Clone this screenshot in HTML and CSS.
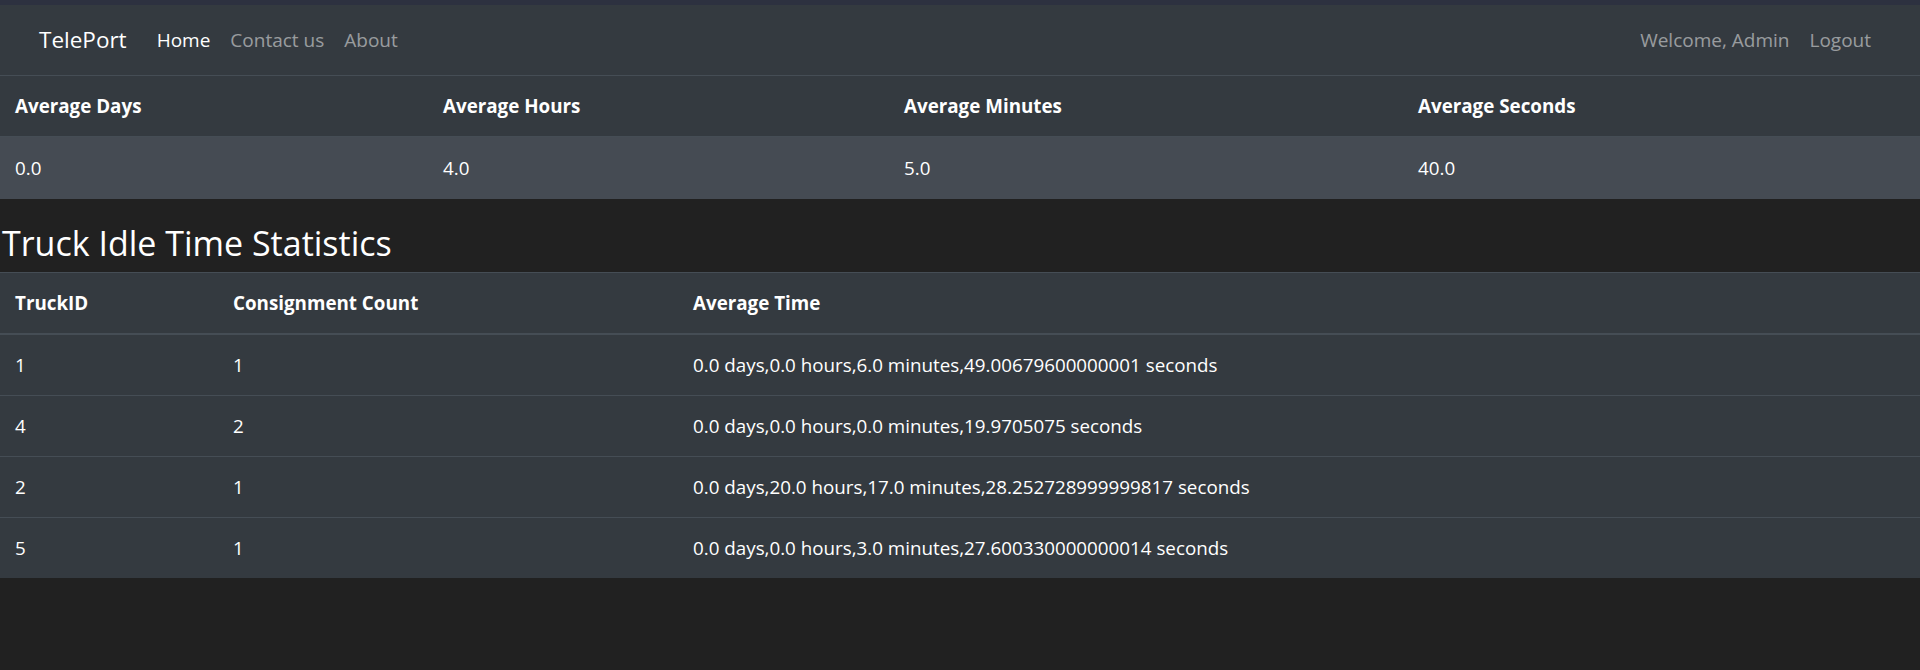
FILE: index.html
```html
<!DOCTYPE html>
<html lang="en">
<head>
<meta charset="utf-8">
<title>TelePort</title>
<link rel="stylesheet" href="styles.css">
</head>
<body>
<div class="topstrip"></div>
<nav class="navbar">
  <div class="nav-inner">
    <a class="brand" href="#">TelePort</a>
    <ul class="nav-links">
      <li><a class="nav-link active" href="#">Home</a></li>
      <li><a class="nav-link" href="#">Contact us</a></li>
      <li><a class="nav-link" href="#">About</a></li>
    </ul>
    <ul class="nav-links nav-right">
      <li><span class="nav-link">Welcome, Admin</span></li>
      <li><a class="nav-link" href="#">Logout</a></li>
    </ul>
  </div>
</nav>
<table class="table summary">
  <thead>
    <tr><th class="c1">Average Days</th><th class="c2">Average Hours</th><th class="c3">Average Minutes</th><th>Average Seconds</th></tr>
  </thead>
  <tbody>
    <tr class="hl"><td>0.0</td><td>4.0</td><td>5.0</td><td>40.0</td></tr>
  </tbody>
</table>
<h2 class="title">Truck Idle Time Statistics</h2>
<table class="table stats">
  <thead>
    <tr><th class="s1">TruckID</th><th class="s2">Consignment Count</th><th>Average Time</th></tr>
  </thead>
  <tbody>
    <tr><td>1</td><td>1</td><td>0.0 days,0.0 hours,6.0 minutes,49.00679600000001 seconds</td></tr>
    <tr><td>4</td><td>2</td><td>0.0 days,0.0 hours,0.0 minutes,19.9705075 seconds</td></tr>
    <tr><td>2</td><td>1</td><td>0.0 days,20.0 hours,17.0 minutes,28.252728999999817 seconds</td></tr>
    <tr><td>5</td><td>1</td><td>0.0 days,0.0 hours,3.0 minutes,27.600330000000014 seconds</td></tr>
  </tbody>
</table>
</body>
</html>
```
FILE: styles.css
```css
* { box-sizing: border-box; }
html, body { margin: 0; padding: 0; }
body {
  background: #212121;
  color: #fff;
  font-family: "Open Sans", "Noto Sans", sans-serif;
  font-size: 18.8px;
  line-height: 30px;
}
.topstrip { height: 5px; background: #2d3140; }
.navbar {
  background: #343a40;
  padding: 10px 20px;
}
.nav-inner {
  display: flex;
  align-items: center;
  padding: 0 19px;
  height: 50px;
}
.brand {
  color: #fff;
  text-decoration: none;
  font-size: 22.5px;
  line-height: 38px;
  margin-right: 20px;
}
.nav-links {
  display: flex;
  list-style: none;
  margin: 0;
  padding: 0;
}
.nav-right { margin-left: auto; }
.nav-link {
  display: block;
  padding: 10px 10px;
  color: rgba(255,255,255,.5);
  text-decoration: none;
  font-size: 19px;
}
.nav-link.active { color: #fff; }
.table {
  width: 100%;
  border-collapse: collapse;
  table-layout: fixed;
  background: #343a40;
  color: #fff;
}
.table th, .table td {
  text-align: left;
  padding: 15px;
  border-top: 1px solid #454d55;
  vertical-align: top;
  white-space: nowrap;
}
.table th { font-weight: 700; }
.summary { margin-bottom: 20px; }
.summary .hl { background: #454b53; }
.summary .hl td { padding: 16px 15px; }
.c1 { width: 428px; }
.c2 { width: 461px; }
.c3 { width: 514px; }
.stats thead th { border-bottom: 2px solid #454d55; }
.s1 { width: 218px; }
.s2 { width: 460px; }
.title {
  margin: 0 0 5px 0;
  padding-left: 2px;
  font-size: 34px;
  line-height: 48px;
  font-weight: 500;
}
```
